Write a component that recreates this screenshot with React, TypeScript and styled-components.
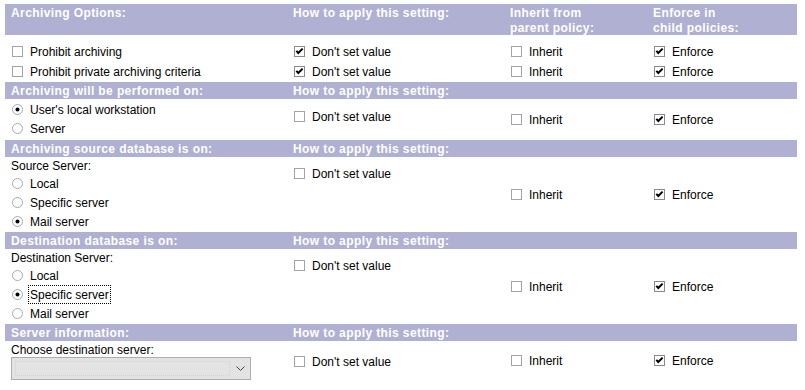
import * as React from "react";
import styled, { createGlobalStyle } from "styled-components";

const COLS = "282px 217px 143px 150px";

const GlobalStyle = createGlobalStyle`
  html, body {
    margin: 0;
    padding: 0;
    background: #fff;
  }
  body {
    font-family: "Liberation Sans", Arial, sans-serif;
    font-size: 12px;
    color: #000;
  }
`;

const SPage = styled.div`
  width: 792px;
  margin-left: 5px;
  padding-top: 4px;
`;

const SHeader = styled.div<{ $tall?: boolean }>`
  display: grid;
  grid-template-columns: ${COLS};
  box-sizing: border-box;
  height: ${p => (p.$tall ? 31 : 17)}px;
  padding-top: ${p => (p.$tall ? 2 : 1)}px;
  background: #b0b0d2;
  color: #fff;
  font-weight: bold;
  letter-spacing: 0.4px;
  line-height: ${p => (p.$tall ? 15 : 16)}px;
  white-space: pre-line;
`;

const SHeaderCell = styled.div`
  padding-left: 6px;
`;

const SBody = styled.div<{ $pt: number; $pb: number }>`
  display: grid;
  grid-template-columns: ${COLS};
  padding: ${p => p.$pt}px 0 ${p => p.$pb}px;
`;

const SCell = styled.div<{ $center?: boolean; $top?: number }>`
  padding-left: 6px;
  padding-top: ${p => p.$top || 0}px;
  align-self: ${p => (p.$center ? "center" : "start")};
`;

const SItem = styled.div<{ $h?: number }>`
  display: flex;
  align-items: center;
  height: ${p => p.$h || 19}px;
  white-space: nowrap;
`;

const SLabel = styled.span<{ $focus?: boolean }>`
  margin-left: 5px;
  padding: 2px 1px 1px 1px;
  border: 1px ${p => (p.$focus ? "dotted #000" : "solid transparent")};
`;

const SText = styled.div<{ $h?: number }>`
  box-sizing: border-box;
  height: ${p => p.$h || 17}px;
  padding-top: 2px;
  line-height: 14px;
`;

const SGlyph = styled.svg`
  flex: none;
  margin-left: 1px;
  display: block;
`;

const SSelect = styled.div`
  display: flex;
  align-items: center;
  box-sizing: border-box;
  width: 240px;
  height: 23px;
  background: #e3e3e3;
  border: 1px solid #adadad;
  padding: 3px 5px 3px 3px;
`;

const SSelectInner = styled.div`
  flex: 1;
  align-self: stretch;
  margin-right: 6px;
  border: 1px dotted #d2d2d2;
`;

const Box = ({ checked }: { checked?: boolean }) => (
  <SGlyph width="11" height="11" viewBox="0 0 11 11">
    <rect x="0.5" y="0.5" width="10" height="10" fill="#fff" stroke={checked ? "#8a8a8a" : "#a4a4a4"} />
    {checked && (
      <polyline points="2.3,4.8 4.3,7 8.6,2.6" fill="none" stroke="#000" strokeWidth="2" />
    )}
  </SGlyph>
);

const Radio = ({ checked }: { checked?: boolean }) => (
  <SGlyph width="11" height="11" viewBox="0 0 11 11">
    <circle cx="5.5" cy="5.5" r="5" fill="#fff" stroke="#a8a8a8" />
    {checked && <circle cx="5.5" cy="5.5" r="2" fill="#000" />}
  </SGlyph>
);

const Check = (props: { label: string; checked?: boolean; h?: number }) => (
  <SItem $h={props.h}>
    <Box checked={props.checked} />
    <SLabel>{props.label}</SLabel>
  </SItem>
);

const Option = (props: { label: string; checked?: boolean; focus?: boolean }) => (
  <SItem>
    <Radio checked={props.checked} />
    <SLabel $focus={props.focus}>{props.label}</SLabel>
  </SItem>
);

const Header = ({ title, tall }: { title: string; tall?: boolean }) => (
  <SHeader $tall={tall}>
    <SHeaderCell>{title}</SHeaderCell>
    <SHeaderCell>{"How to apply this setting:"}</SHeaderCell>
    <SHeaderCell>{tall ? "Inherit from\nparent policy:" : ""}</SHeaderCell>
    <SHeaderCell>{tall ? "Enforce in\nchild policies:" : ""}</SHeaderCell>
  </SHeader>
);

const Policy = (props: { top: number; children: React.ReactNode; pt: number; pb: number }) => (
  <SBody $pt={props.pt} $pb={props.pb}>
    {props.children}
    <SCell $top={props.top}>
      <Check label="Don't set value" />
    </SCell>
    <SCell $center>
      <Check label="Inherit" />
    </SCell>
    <SCell $center>
      <Check label="Enforce" checked />
    </SCell>
  </SBody>
);

const App = () => (
  <SPage>
    <GlobalStyle />
    <Header title="Archiving Options:" tall />
    <SBody $pt={6} $pb={1}>
      <SCell>
        <Check label="Prohibit archiving" h={20} />
        <Check label="Prohibit private archiving criteria" h={20} />
      </SCell>
      <SCell>
        <Check label="Don't set value" checked h={20} />
        <Check label="Don't set value" checked h={20} />
      </SCell>
      <SCell>
        <Check label="Inherit" h={20} />
        <Check label="Inherit" h={20} />
      </SCell>
      <SCell>
        <Check label="Enforce" checked h={20} />
        <Check label="Enforce" checked h={20} />
      </SCell>
    </SBody>

    <Header title="Archiving will be performed on:" />
    <Policy top={7} pt={1} pb={2}>
      <SCell>
        <Option label="User's local workstation" checked />
        <Option label="Server" />
      </SCell>
    </Policy>

    <Header title="Archiving source database is on:" />
    <Policy top={7} pt={0} pb={1}>
      <SCell>
        <SText>{"Source Server:"}</SText>
        <Option label="Local" />
        <Option label="Specific server" />
        <Option label="Mail server" checked />
      </SCell>
    </Policy>

    <Header title="Destination database is on:" />
    <Policy top={7} pt={0} pb={1}>
      <SCell>
        <SText>{"Destination Server:"}</SText>
        <Option label="Local" />
        <Option label="Specific server" checked focus />
        <Option label="Mail server" />
      </SCell>
    </Policy>

    <Header title="Server information:" />
    <Policy top={11} pt={0} pb={2}>
      <SCell>
        <SText $h={16}>{"Choose destination server:"}</SText>
        <SSelect>
          <SSelectInner />
          <svg width="9" height="5" viewBox="0 0 9 5">
            <polyline points="0.5,0.5 4.5,4.5 8.5,0.5" fill="none" stroke="#404040" />
          </svg>
        </SSelect>
      </SCell>
    </Policy>
  </SPage>
);

export default App;
